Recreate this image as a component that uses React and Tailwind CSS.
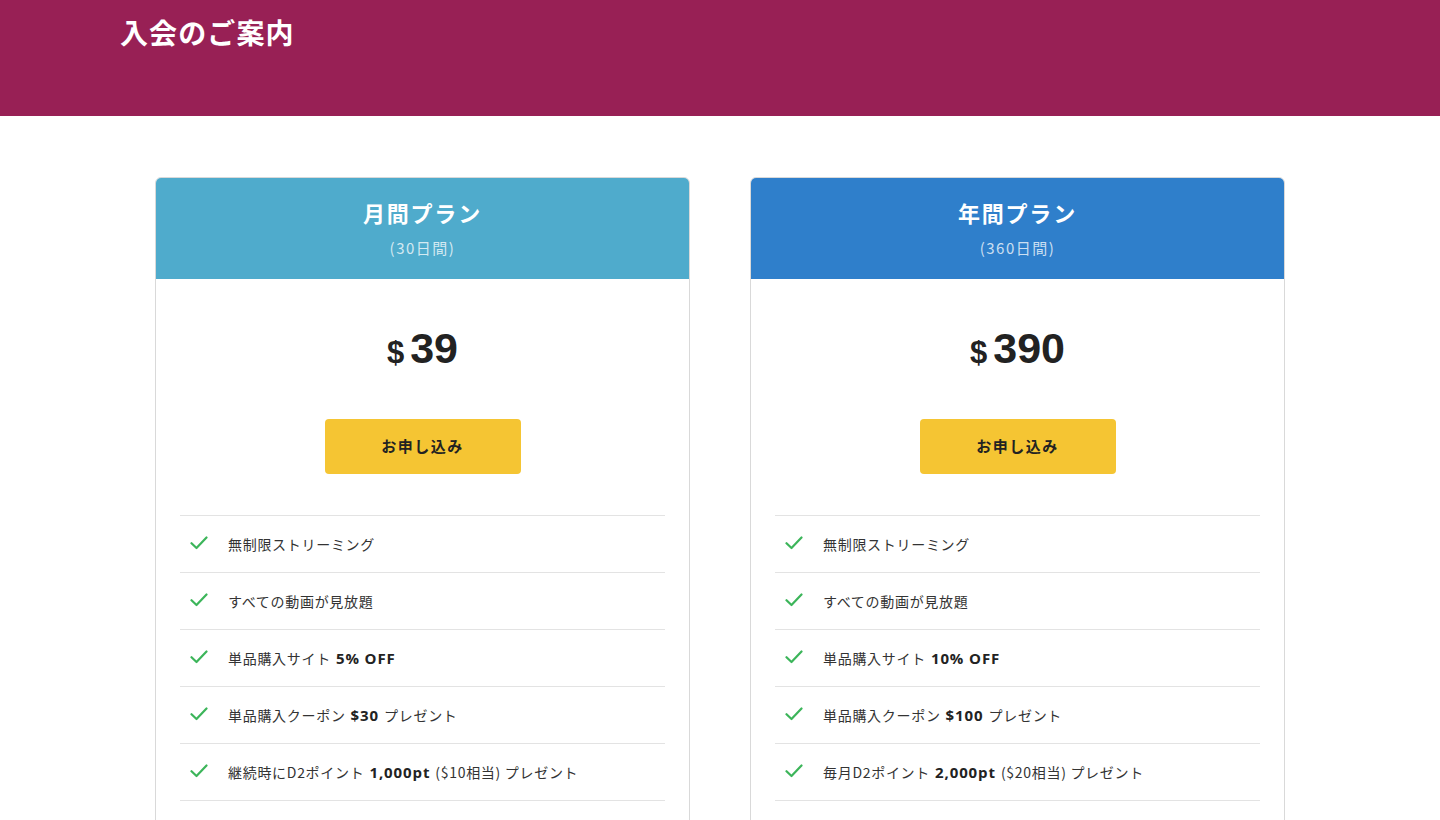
import React from 'react';

const FONT = { fontFamily: '"Noto Sans CJK JP", "Noto Sans", sans-serif' };

const plans = [
  {
    id: 'monthly',
    name: '月間プラン',
    term: '(30日間)',
    price: '39',
    headerClass: 'bg-[#4fabcc]',
    features: [
      [{ t: '無制限ストリーミング' }],
      [{ t: 'すべての動画が見放題' }],
      [{ t: '単品購入サイト' }, { t: '5% OFF', b: true }],
      [{ t: '単品購入クーポン' }, { t: '$30', b: true }, { t: 'プレゼント' }],
      [{ t: '継続時にD2ポイント' }, { t: '1,000pt', b: true }, { t: '($10相当) プレゼント' }],
    ],
  },
  {
    id: 'yearly',
    name: '年間プラン',
    term: '(360日間)',
    price: '390',
    headerClass: 'bg-[#2f7fcb]',
    features: [
      [{ t: '無制限ストリーミング' }],
      [{ t: 'すべての動画が見放題' }],
      [{ t: '単品購入サイト' }, { t: '10% OFF', b: true }],
      [{ t: '単品購入クーポン' }, { t: '$100', b: true }, { t: 'プレゼント' }],
      [{ t: '毎月D2ポイント' }, { t: '2,000pt', b: true }, { t: '($20相当) プレゼント' }],
    ],
  },
];

const Check = () => (
  <svg width="18" height="14" viewBox="0 0 18 14" fill="none" className="shrink-0">
    <path d="M1.5 7.2 L6.5 12 L16.5 1.5" stroke="#3cb55a" strokeWidth="2.2" strokeLinecap="round" strokeLinejoin="round" />
  </svg>
);

const PlanCard = ({ plan }) => {
  return (
    <div className="w-[535px] rounded-t-md border border-[#d9d9d9] bg-white overflow-hidden">
      {/* header */}
      <div className={`${plan.headerClass} pt-[18px] pb-[20px] text-center text-white`}>
        <div className="text-[22px] leading-[32px] font-bold tracking-[0.08em]">{plan.name}</div>
        <div className="mt-[9px] text-[15px] leading-[22px] text-white/75 tracking-[0.1em]">{plan.term}</div>
      </div>

      {/* price + button */}
      <div className="px-6 pb-10">
        <div className="pt-[44px] flex items-baseline justify-center text-[#222]" style={{ fontFamily: '"Liberation Sans", Arial, sans-serif' }}>
          <span className="text-[31px] font-bold leading-none mr-[6px]">$</span>
          <span className="text-[43px] font-bold leading-[50px]">{plan.price}</span>
        </div>
        <div className="mt-[46px] flex justify-center">
          <button className="w-[196px] h-[55px] rounded bg-[#f5c533] text-[15px] font-bold text-[#222] tracking-[0.1em]">
            お申し込み
          </button>
        </div>

        {/* features */}
        <ul className="mt-[41px] border-b border-[#e3e3e3]">
          {plan.features.map((parts, i) => (
            <li key={i} className="h-[57px] border-t border-[#e3e3e3] flex items-center pl-[10px]">
              <span className="-mt-[3px]"><Check /></span>
              <span className="ml-[20px] flex items-center gap-[5px] text-[14px] text-[#333] tracking-[0.05em]">
                {parts.map((p, j) =>
                  p.b ? (
                    <b key={j} className="font-bold text-[#222] text-[15px] tracking-[0.06em]" style={{ fontFamily: '"Open Sans", sans-serif' }}>{p.t}</b>
                  ) : (
                    <span key={j}>{p.t}</span>
                  )
                )}
              </span>
            </li>
          ))}
        </ul>
      </div>
    </div>
  );
};

export default function App() {
  return (
    <div className="min-h-screen bg-white" style={FONT}>
      <header className="h-[116px] bg-[#982055]">
        <div className="w-[1200px] mx-auto pt-[12px]">
          <h1 className="text-[28px] leading-[40px] font-bold text-white tracking-[0.04em]">入会のご案内</h1>
        </div>
      </header>

      <main className="mt-[61px] flex justify-center gap-[60px]">
        {plans.map((plan) => (
          <PlanCard key={plan.id} plan={plan} />
        ))}
      </main>
    </div>
  );
}
